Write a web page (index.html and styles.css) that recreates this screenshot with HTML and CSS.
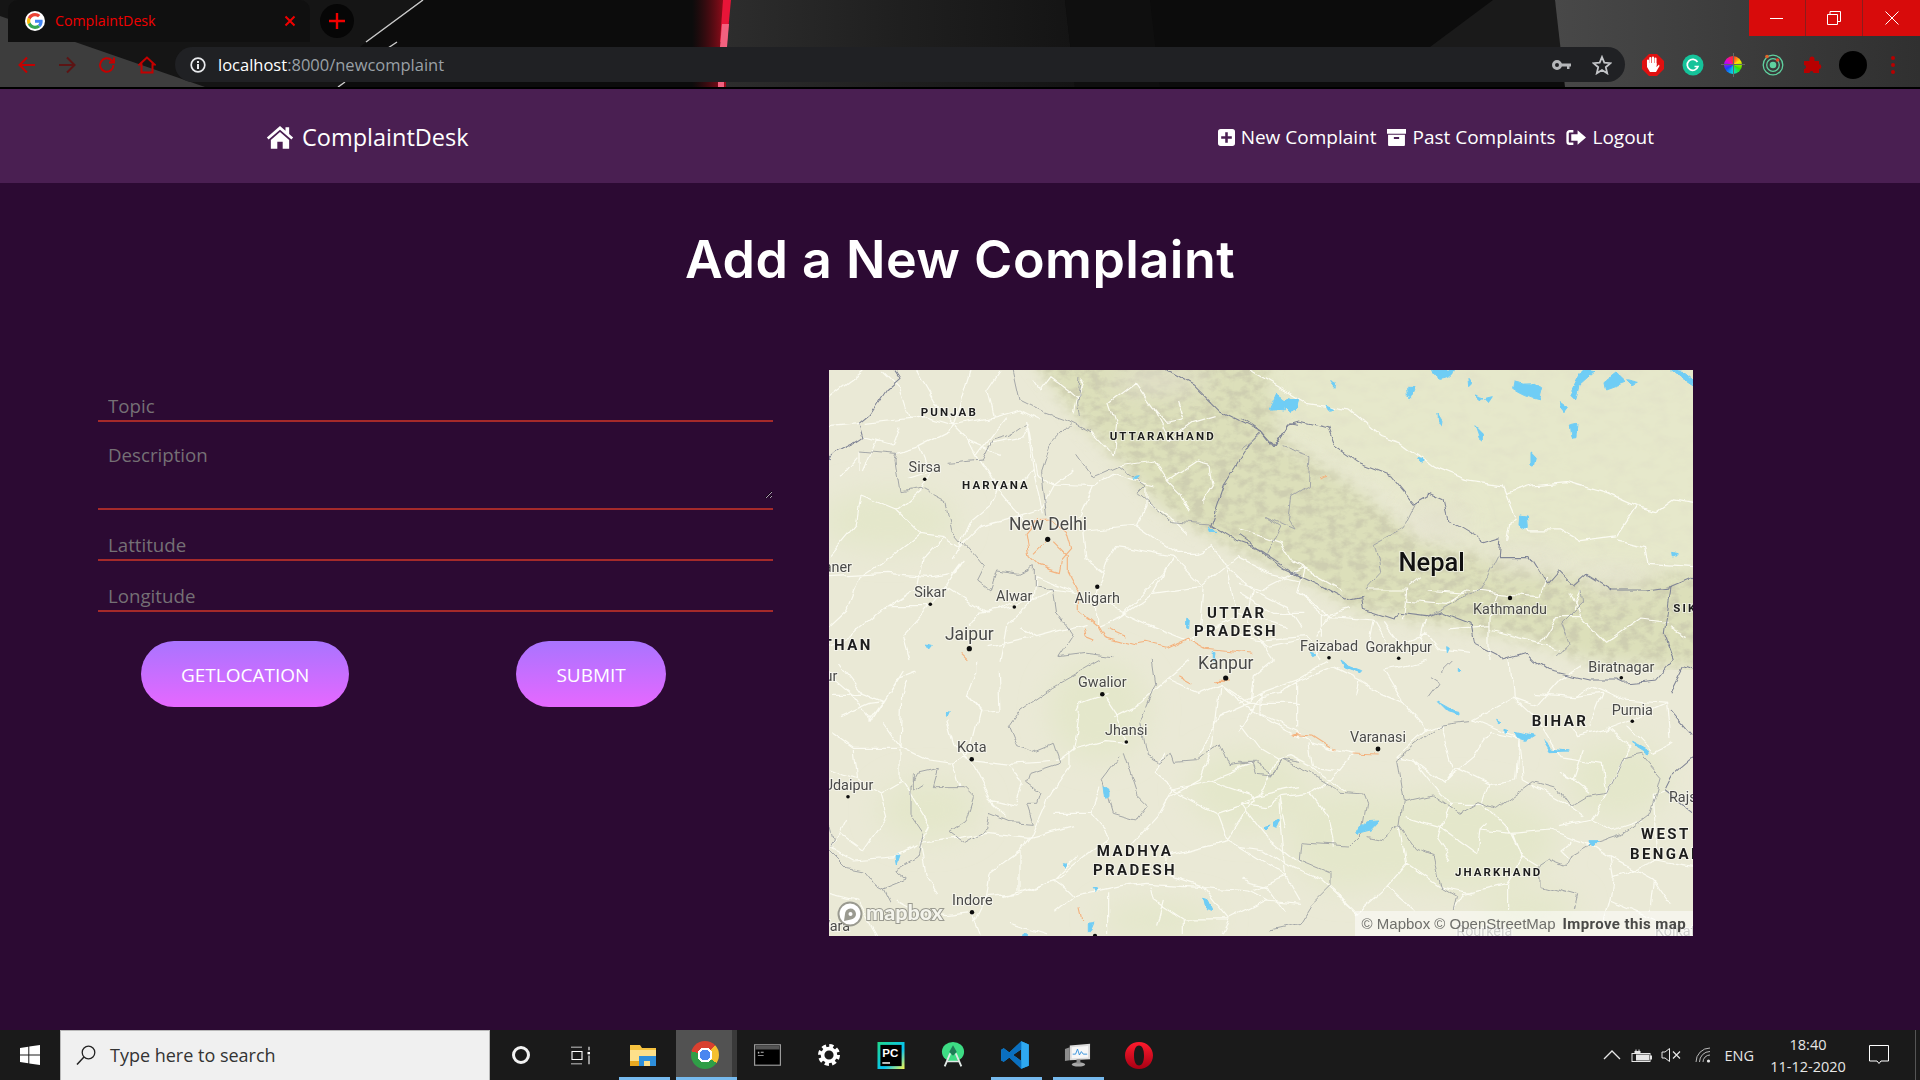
FILE: index.html
```html
<!DOCTYPE html>
<html lang="en">
<head>
    <meta charset="UTF-8">
    <meta name="viewport" content="width=device-width, initial-scale=1.0">
    <title>ComplaintDesk</title>
    <link rel="stylesheet" href="styles.css">
</head>
<body>
    <!-- browser frame -->
    <div class="browser">
        <svg class="wallpaper" viewBox="0 0 1920 87" preserveAspectRatio="none">
            <defs>
                <linearGradient id="wallMid" x1="0" x2="1" y1="0" y2="0">
                    <stop offset="0" stop-color="#2d2d2d"/>
                    <stop offset=".5" stop-color="#1f1f1f"/>
                    <stop offset="1" stop-color="#141414"/>
                </linearGradient>
                <linearGradient id="glow" x1="0" x2="1" y1="0" y2="0">
                    <stop offset="0" stop-color="#5a0810" stop-opacity="0"/>
                    <stop offset="1" stop-color="#a00c1c"/>
                </linearGradient>
                <linearGradient id="wallRight" x1="0" x2="1" y1="0" y2="0">
                    <stop offset="0" stop-color="#484848"/>
                    <stop offset="1" stop-color="#303030"/>
                </linearGradient>
            </defs>
            <rect width="1920" height="87" fill="#0c0c0c"/>
            <polygon points="0,0 420,0 360,47 340,87 0,87" fill="#151515"/>
            <polygon points="0,16 205,87 0,87" fill="#3d3d3d"/>
            <polygon points="728,0 1065,0 1075,87 724,87" fill="url(#wallMid)"/>
            <polygon points="1065,0 1150,0 1160,87 1075,87" fill="#0f0f0f"/>
            <rect x="692" width="34" height="87" fill="url(#glow)"/>
            <polygon points="723,0 731,0 727,42 720,42" fill="#e81538"/>
            <polygon points="722,24 729,24 727,47 720,47" fill="#f2617f"/>
            <rect x="718" y="82" width="6" height="5" fill="#f2617f"/>
            <polygon points="1493,0 1555,0 1563,47 1430,47" fill="#1a1a1a"/>
            <polygon points="1555,0 1920,0 1920,87 1565,87" fill="url(#wallRight)"/>
            <path d="M423 0 366 42M397 42 385 50M345 82 338 87" stroke="#c9c9c9" stroke-width="1.5" fill="none"/>
        </svg>

        <div class="tabstrip">
            <div class="tab">
                <span class="favicon">
                    <svg viewBox="0 0 48 48" width="16" height="16">
                        <path fill="#EA4335" d="M24 9.5c3.54 0 6.71 1.22 9.21 3.6l6.85-6.85C35.9 2.38 30.47 0 24 0 14.62 0 6.51 5.38 2.56 13.22l7.98 6.19C12.43 13.72 17.74 9.5 24 9.5z"/>
                        <path fill="#4285F4" d="M46.98 24.55c0-1.57-.15-3.09-.38-4.55H24v9.02h12.94c-.58 2.96-2.26 5.48-4.78 7.18l7.73 6c4.51-4.18 7.09-10.36 7.09-17.65z"/>
                        <path fill="#FBBC05" d="M10.53 28.59c-.48-1.45-.76-2.99-.76-4.59s.27-3.14.76-4.59l-7.98-6.19C.92 16.46 0 20.12 0 24c0 3.88.92 7.54 2.56 10.78l7.97-6.19z"/>
                        <path fill="#34A853" d="M24 48c6.48 0 11.93-2.13 15.89-5.81l-7.73-6c-2.15 1.45-4.92 2.3-8.16 2.3-6.26 0-11.57-4.22-13.47-9.91l-7.98 6.19C6.51 42.62 14.62 48 24 48z"/>
                    </svg>
                </span>
                <span class="tab-title">ComplaintDesk</span>
                <svg class="tab-close" viewBox="0 0 12 12" width="12" height="12"><path d="M1.5 1.5 10.500 10.500M10.500 1.500 1.500 10.500" stroke="#f00000" stroke-width="2"/></svg>
            </div>
            <div class="new-tab">
                <svg viewBox="0 0 16 16" width="16" height="16"><path d="M8 0V16M0 8H16" stroke="#f00000" stroke-width="2.400"/></svg>
            </div>
            <div class="win-buttons">
                <div class="win-btn"><svg viewBox="0 0 14 14" width="14" height="14"><path d="M0 7.500H13" stroke="#fff"/></svg></div>
                <div class="win-btn win-btn-mid"><svg viewBox="0 0 14 14" width="14" height="14"><path d="M.5 3.500H10.500V13.500H.5ZM3 3V.5H13.500V10.500H11" stroke="#fff" fill="none"/></svg></div>
                <div class="win-btn win-btn-last"><svg viewBox="0 0 14 14" width="14" height="14"><path d="M.5.5 13.500 13.500M13.500.5.5 13.500" stroke="#fff"/></svg></div>
            </div>
        </div>

        <div class="toolbar">
            <span class="tool"><svg viewBox="0 0 18 18" width="18" height="18"><path d="M17 9H2M9 1.500 1.500 9 9 16.500" class="tool-line"/></svg></span>
            <span class="tool tool-dim"><svg viewBox="0 0 18 18" width="18" height="18"><path d="M1 9H16M9 1.500 16.500 9 9 16.500" class="tool-line"/></svg></span>
            <span class="tool"><svg viewBox="0 0 18 18" width="18" height="18"><path d="M15.500 9A6.700 6.700 0 1 1 13.500 4.200L15.800 6.300M16 1.500V6.500H11" class="tool-line"/></svg></span>
            <span class="tool"><svg viewBox="0 0 18 18" width="18" height="18"><path d="M9 1.500 1.500 8.500H3.500V16.500H14.500V8.500H16.500Z" class="tool-line"/></svg></span>
            <div class="omnibox">
                <svg class="omni-info" viewBox="0 0 16 16" width="16" height="16"><circle cx="8" cy="8" r="6.800" fill="none" stroke="#e8eaed" stroke-width="1.700"/><path d="M7 7h2v5H7zM7 4h2v2H7z" fill="#e8eaed"/></svg>
                <span class="url"><span class="url-host">localhost</span>:8000/newcomplaint</span>
                <svg class="omni-key" viewBox="0 0 20 12" width="20" height="12"><circle cx="5" cy="6" r="3.500" fill="none" stroke="#b5b7ba" stroke-width="3"/><path d="M9 4.500H19V7.500H17.500V10H15V7.500H9Z" fill="#b5b7ba"/></svg>
                <svg class="omni-star" viewBox="0 0 20 20" width="20" height="20"><path d="M10 2 12.300 7.700 18.500 8.200 13.800 12.200 15.200 18.300 10 15 4.800 18.300 6.200 12.200 1.500 8.200 7.700 7.700Z" fill="none" stroke="#c4c6c9" stroke-width="1.800"/></svg>
            </div>
            <div class="extensions">
                <span class="ext"><svg viewBox="0 0 22 22" width="22" height="22"><path d="M7 0H15L22 7V15L15 22H7L0 15V7Z" fill="#e01010"/><path d="M6 11V6.500M8.300 11V4M11 11V3.500M13.500 11V4.500" stroke="#fff" stroke-width="2.100" stroke-linecap="round"/><path d="M5 9H14.500V13L17 10.500 17.500 12 14 18H8L5 13Z" fill="#fff"/></svg></span>
                <span class="ext"><svg viewBox="0 0 22 22" width="22" height="22"><circle cx="11" cy="11" r="10.500" fill="#15c39a"/><path d="M15.500 8A5.500 5.500 0 1 0 16 12.500H12.500" fill="none" stroke="#fff" stroke-width="1.700"/></svg></span>
                <span class="ext"><span class="wheel"></span></span>
                <span class="ext"><svg viewBox="0 0 22 22" width="22" height="22"><circle cx="11" cy="11" r="9.800" fill="none" stroke="#5fd09f" stroke-width="1.300"/><circle cx="11" cy="11" r="6.300" fill="none" stroke="#5fd09f" stroke-width="1.300"/><circle cx="11" cy="11" r="3.300" fill="#5fd09f"/><circle cx="5" cy="2.500" r="1.800" fill="#e2662a"/><circle cx="15.500" cy="6" r="1.800" fill="#e2462a"/></svg></span>
                <span class="ext"><svg viewBox="0 0 20 20" width="20" height="20"><path d="M1 6H6.500V4A2.500 2.500 0 1 1 11.500 4V6H16V9.300A2.300 2.300 0 1 1 16 14V18H10.500A2 2 0 1 0 6.500 18H1V14A2 2 0 1 0 1 10Z" fill="#b80000"/></svg></span>
                <span class="ext"><span class="avatar"></span></span>
                <span class="ext"><span class="menu-dots"></span></span>
            </div>
        </div>
    </div>

    <!-- page -->
    <nav class="navbar">
        <a class="brand" href="#">
            <svg viewBox="0 0 26 22" width="28" height="24"><path d="M13 .8 .8 11.500l1.600 1.900L13 4.200l10.600 9.200 1.600-1.900L21.500 8.300V2h-3.400v3.300Z" fill="#fff"/><path d="M13 6.300 4.500 13.700V22h6v-6.500h5V22h6V13.700Z" fill="#fff"/></svg>
            ComplaintDesk
        </a>
        <div class="nav-links">
            <a class="nav-link" href="#">
                <svg viewBox="0 0 16 16" width="17" height="17"><path fill-rule="evenodd" d="M2.500 0h11A2.500 2.500 0 0 1 16 2.500v11a2.500 2.500 0 0 1-2.500 2.500h-11A2.500 2.500 0 0 1 0 13.500v-11A2.500 2.500 0 0 1 2.500 0ZM6.800 3v3.800H3v2.400h3.800V13h2.400V9.200H13V6.800H9.200V3Z" fill="#fff"/></svg>
                New Complaint
            </a>
            <a class="nav-link" href="#">
                <svg viewBox="0 0 18 16" width="19" height="17"><path fill-rule="evenodd" d="M0 0h18v4.500H0ZM1 5.500h16V15a1 1 0 0 1-1 1H2a1 1 0 0 1-1-1ZM6.500 7.500v2h5v-2Z" fill="#fff"/></svg>
                Past Complaints
            </a>
            <a class="nav-link" href="#">
                <svg viewBox="0 0 19 16" width="20" height="17"><path d="M7 2H3.500A2 2 0 0 0 1.500 4v8a2 2 0 0 0 2 2H7" fill="none" stroke="#fff" stroke-width="2.300"/><path d="M11 1 19 8l-8 7v-4H5V5h6Z" fill="#fff"/></svg>
                Logout
            </a>
        </div>
    </nav>

    <main class="content">
        <h1 class="title">Add a New Complaint</h1>
        <section class="columns">
            <form class="complaint-form">
                <input class="field" type="text" placeholder="Topic">
                <div class="area-wrap">
                    <textarea class="field field-area" placeholder="Description"></textarea>
                </div>
                <input class="field" type="text" placeholder="Lattitude">
                <input class="field" type="text" placeholder="Longitude">
                <div class="form-buttons">
                    <button class="btn" type="button">GETLOCATION</button>
                    <button class="btn" type="button">SUBMIT</button>
                </div>
            </form>

            <div class="map">
                <svg class="map-canvas" viewBox="0 0 864 566" width="864" height="566">
                    <defs>
                        <filter id="soft" x="-20%" y="-20%" width="140%" height="140%"><feGaussianBlur stdDeviation="14"/></filter>
                        <filter id="relief" x="0" y="0" width="100%" height="100%">
                            <feGaussianBlur in="SourceGraphic" stdDeviation="8" result="shape"/>
                            <feTurbulence type="fractalNoise" baseFrequency=".08 .11" numOctaves="4" seed="11" result="noise"/>
                            <feColorMatrix in="noise" type="matrix" values="0 0 0 0 .62  0 0 0 0 .62  0 0 0 0 .44  3.400 0 0 0 -1.400" result="shade"/>
                            <feComposite in="shade" in2="shape" operator="in" result="clipped"/>
                            <feMerge><feMergeNode in="shape"/><feMergeNode in="clipped"/></feMerge>
                        </filter>
                        <filter id="crumple" x="0" y="0" width="100%" height="100%">
                            <feGaussianBlur in="SourceGraphic" stdDeviation="14" result="shape"/>
                            <feTurbulence type="fractalNoise" baseFrequency=".05 .09" numOctaves="4" seed="4" result="noise"/>
                            <feColorMatrix in="noise" type="matrix" values="0 0 0 0 .76  0 0 0 0 .76  0 0 0 0 .58  2 0 0 0 -.85" result="shade"/>
                            <feComposite in="shade" in2="shape" operator="in" result="clipped"/>
                            <feMerge><feMergeNode in="shape"/><feMergeNode in="clipped"/></feMerge>
                        </filter>
                        <!-- bends the straight polylines so they read as roads and rivers -->
                        <filter id="wobble" filterUnits="userSpaceOnUse" x="0" y="0" width="864" height="566" color-interpolation-filters="sRGB">
                            <feTurbulence type="fractalNoise" baseFrequency=".045" numOctaves="3" seed="3" result="warp"/>
                            <feDisplacementMap in="SourceGraphic" in2="warp" scale="9" xChannelSelector="R" yChannelSelector="G"/>
                            <feGaussianBlur stdDeviation=".35"/>
                        </filter>
                    </defs>

                    <rect width="864" height="566" fill="#eae9d6"/>

                    <!-- terrain -->
                    <g filter="url(#soft)" fill="#e4e7cb">
                        <ellipse cx="60" cy="150" rx="70" ry="30"/>
                        <ellipse cx="270" cy="340" rx="50" ry="50"/>
                        <ellipse cx="100" cy="440" rx="50" ry="30"/>
                        <ellipse cx="420" cy="420" rx="60" ry="40"/>
                        <ellipse cx="620" cy="470" rx="110" ry="50"/>
                        <ellipse cx="520" cy="470" rx="60" ry="50"/>
                        <ellipse cx="790" cy="410" rx="50" ry="40"/>
                        <ellipse cx="700" cy="540" rx="50" ry="20"/>
                        <ellipse cx="330" cy="550" rx="60" ry="18"/>
                    </g>
                    <polygon filter="url(#crumple)" fill="#e6e8cb" points="330,-30 900,-30 900,230 640,175 540,110 440,60"/>
                    <polygon filter="url(#relief)" fill="#dcdfba" points="190,-30 430,-30 450,70 530,120 590,170 700,200 780,215 900,200 900,300 760,290 700,270 620,255 530,240 470,205 400,175 335,140 300,100 250,50"/>
                    <g filter="url(#soft)" fill="#e2dfcd" opacity=".8">
                        <ellipse cx="330" cy="10" rx="50" ry="14"/>
                        <ellipse cx="610" cy="150" rx="30" ry="14"/>
                        <ellipse cx="700" cy="190" rx="45" ry="9"/>
                        <ellipse cx="790" cy="210" rx="35" ry="10"/>
                    </g>

                    <g filter="url(#wobble)">
                    <!-- north west tile -->
                    <g transform="translate(-9 -10) scale(.3333)">
                        <path class="road" d="M290,30 L345,125 L400,195 L445,240 L470,290 L530,385 L575,440 L620,490M240,80 L270,175 L315,170 L400,195 L530,170 L600,150 L660,180M140,190 L230,180 L270,175M130,230 L220,255 L240,200M170,240 L130,330M400,195 L390,215 L300,260 L230,280M510,250 L610,230 L625,190M620,180 L640,330 L670,460M625,200 L650,340 L700,375 L760,330M700,375 L660,450 L600,470M700,375 L820,380 L880,340 L1000,375M820,380 L780,470 L700,510M530,385 L510,440 L450,490 L400,600M600,470 L480,500 L420,560 L375,530 L310,600 L295,680M430,600 L400,640 L340,650 L200,640 L30,650M120,405 L105,500 L30,590M800,510 L950,495 L1070,580 L1130,580 L1180,560M950,495 L975,440 L975,380M785,510 L795,600 L850,640 L830,680 L830,800M850,640 L860,610 L890,560 L930,565 L1060,590 L1030,640 L900,770M1060,590 L1150,680 L1140,790 L1120,840M1140,680 L1250,590 L1350,640 L1440,660M1220,620 L1300,690 L1400,740 L1440,800M830,720 L1000,800 L1100,840M770,700 L645,650 L640,720 L560,800 L540,900M295,680 L200,740 L90,830 L27,850M330,740 L250,830 L270,900M450,800 L480,760 L580,740 L640,720M600,800 L650,830 L800,790M500,860 L640,830M27,110 L130,30M120,270 L120,330M115,290 L60,355M640,60 L660,90 L690,50 L770,110 L790,60M770,110 L760,160M810,215 L880,290 L890,190 L870,130 L950,70 L1000,140 L1040,190 L1090,180 L1070,120M1000,140 L1050,240 L1120,190 L1190,170M900,315 L1000,300 L1040,360 L1070,340 L1130,300 L1170,310 L1180,380 L1150,430M1040,360 L1080,400 L1110,460M30,200 L120,190M240,80 L190,30M450,30 L400,195M470,290 L560,170M520,170 L500,90 L540,30M300,260 L330,330 L265,350M530,385 L620,360 L640,330M445,240 L540,280M120,405 L230,450 L300,390 L330,330M230,450 L300,520 L375,530M300,520 L210,590 L120,650M120,650 L80,750 L27,800M200,740 L330,740 L380,680 L430,600M380,680 L500,760M500,760 L600,720M900,770 L1000,700 L1140,680M830,800 L900,770M640,720 L700,690 L770,700M1180,560 L1220,620M1100,840 L1250,760 L1400,800M1250,760 L1220,620M1000,700 L1060,590M1300,690 L1280,790 L1340,860M1340,860 L1440,840M980,430 L1060,480 L1100,520"/>
                        <path class="border" d="M225,300 L230,280 L120,270M225,300 L240,395 L300,385 L375,425 L395,510 L490,620 L470,660 L510,690 L530,630 L600,640 L640,620 L640,680 L700,690 L710,760 L760,830 L720,890M750,190 L690,255 L665,330 L680,470M770,280 L820,350 L900,315 L975,375 L950,400 L1050,485 L1170,495M580,30 L600,120 L680,160 L750,185 L810,215M380,310 L490,300 L520,240 L555,230 L585,215 L620,190M780,60 L770,130 L775,170M880,890 L800,880 L720,890"/>
                        <path class="border-dark" d="M27,300 C40,270 110,255 132,232 L120,190 L150,165 L200,90 L240,55 L225,32M1040,30 L1120,75 L1200,155 L1320,215 L1360,260 L1410,185 L1440,190M1170,495 L1210,375 L1290,250 L1320,220M1170,495 L1250,545 L1320,570 L1440,650"/>
                        <path class="motorway" d="M645,580 L680,545M740,515 L755,565 L725,600 L718,638 L660,620 L630,590 L618,520 L650,482 L700,480 L740,515M700,545 L745,590 L745,640 L775,695 L775,750 L830,795 L850,830 L940,855 L975,850 L1040,865 L1105,835 L1160,865 L1300,880M790,800 L795,830 L820,840M425,880 L445,900M860,805 L915,828"/>
                        <path class="lake" d="M1352,140 L1370,100 L1385,120 L1400,112 L1435,120 L1425,150 L1405,157 L1390,140 L1355,148ZM945,352 L958,350 L948,360ZM1168,500 L1188,518 L1175,517ZM310,855 L328,860 L320,870ZM1100,775 L1108,778 L1106,800 L1100,798ZM1180,875 L1188,875 L1186,900 L1180,900Z"/>
                    </g>

                    <!-- north east tile -->
                    <g transform="translate(411 -10) scale(.3333)">
                        <path class="road road-strong" d="M30,30 L200,130 L330,150 L420,225 L480,245 L580,320 L680,360 L790,375 L800,400 L880,375 L980,365 L1100,400 L1190,440 L1250,455 L1300,420 L1360,430M800,400 L830,470 L810,490 L800,540M1190,440 L1130,530 L1020,545 L960,510 L870,510 L850,500M1130,540 L1220,560 L1230,610 L1360,620"/>
                        <path class="road" d="M0,510 L120,550 L150,600 L240,650 L310,690M0,670 L60,690 L130,655 L190,620 L170,700 L250,770 L330,745M380,690 L500,690 L490,780M500,680 L540,650M560,690 L680,700M490,720 L620,730 L680,690 L770,700 L900,710 L920,650M770,700 L750,770 L750,900M750,810 L900,850 L960,870M170,700 L270,770 L230,830M270,770 L400,780 L440,850M430,790 L480,860 L560,820 L600,870M0,830 L60,840 L200,830 L240,900M1020,690 L1000,750M1290,800 L1340,830M0,700 L100,760 L190,760M250,770 L250,830M560,780 L540,850M620,810 L750,800M900,850 L950,770 L1020,770 L1100,850M1100,850 L1200,780 L1280,790M60,840 L100,900M400,780 L380,880M600,870 L690,880M1020,770 L990,700"/>
                        <path class="border" d="M525,430 L490,500 L400,550 L420,640 L375,690M770,590 L720,690 L650,720 L560,770M210,290 L205,380 L155,410 L145,480 L165,510 L75,470 L120,500 L80,580M0,270 L60,225M1020,690 L1025,730 L965,790 L990,850 L950,890M125,260 L210,290"/>
                        <path class="border-dark" d="M0,175 L60,215 L100,265 L145,190 L180,180 L260,200 L280,255 L360,310 L450,345 L520,430 L570,400 L615,420 L630,485 L730,545 L780,530 L775,590 L870,590 L920,670 L955,630 L1000,675 L1040,640 L1120,690 L1220,690 L1290,680 L1360,650M0,530 L130,625 L240,675 L320,720 L365,710 L370,750 L460,780 L480,760 L560,770 L600,755 L690,790 L700,845 L770,880 L790,900M1290,680 L1270,820 L1300,900M790,900 L860,880 L880,900"/>
                        <path class="motorway" d="M245,360 L270,352"/>
                        <path class="lake" d="M575,30 L640,30 Q635,55 600,58 Q580,50 575,30ZM820,60 Q850,70 880,65 L905,80 L895,120 Q850,110 815,85ZM1030,30 L1065,35 L1020,75 L1010,115 L995,100ZM1125,42 L1155,70 L1100,90 L1095,65ZM1295,30 L1330,35 L1360,60 V78 Q1330,60 1295,30ZM92,140 Q110,125 110,100 L125,110 L130,150 L95,145ZM135,115 L175,118 L170,145 L145,155 L133,145ZM500,85 L525,85 L515,110 L502,105ZM275,68 L290,75 L288,85ZM678,55 L690,70 L680,80ZM708,102 L735,110 L725,117ZM740,115 L760,110 L750,125ZM958,125 L985,145 L975,158 L960,140ZM985,195 L1008,190 L1005,230 L990,232ZM588,165 L600,185 L598,197 L590,190ZM705,200 L730,225 L730,247 L718,238ZM870,278 L886,295 L880,318 L870,312ZM842,462 L865,465 L868,500 L850,508 L840,495ZM255,135 L278,145 L262,148ZM530,295 L550,300 L540,306ZM1298,574 L1315,578 L1300,585ZM1160,65 L1195,73 L1175,80ZM208,880 L225,885 L215,890ZM620,860 L628,865 L622,878Z"/>
                    </g>

                    <!-- south west tile -->
                    <g transform="translate(-9 290) scale(.3333)">
                        <path class="road" d="M30,100 L130,100 L190,125 L240,50 L290,30M60,170 L150,130 L190,125 L150,180 L150,190 L250,30M190,190 L240,260 L320,300 L400,310 L450,270 L480,150 L445,110 L470,40 L470,0M30,215 L100,265 L240,265 L245,110 L260,60M130,100 L60,10M445,110 L480,155 L540,150 L535,30M380,180 L400,250 L450,300 L510,420 L590,440M450,295 L570,310 L610,380 L590,430M570,310 L720,300 L760,270 L860,245 L920,250M750,280 L750,320 L680,420 L630,535 L500,520 L300,550M630,535 L760,500M630,535 L600,575 L510,640 L500,710 L600,700 L720,650M600,575 L600,690M720,650 L780,600 L870,530 L810,460 L840,380M770,150 L780,130 L860,100M780,130 L770,220 L760,270M850,110 L890,170 L920,245M240,270 L240,360 L250,370M30,560 L100,600 L230,590 L290,560M60,520 L30,560M80,480 L60,520 L130,570M300,550 L320,650 L350,700M550,710 L700,660 L730,680 L760,710 L700,760M760,710 L900,680 L980,670 L1150,680 L1290,690 L1345,720M1150,680 L1030,640 L1040,590 L1220,545 L1300,420 L1290,400 L1170,360 L1060,390 L1020,460 L930,560M1020,460 L1050,410 L1140,360 L1180,250 L1200,70M1220,540 L1190,460 L1060,390M1220,540 L1270,570 L1400,650 L1440,720M1300,410 L1440,380M1290,130 L1440,130M1210,80 L1300,150 L1380,200 L1440,230M1380,100 L1320,110 L1290,160 L1260,210M990,680 L1000,720 L1090,780M1030,720 L1010,800M1150,680 L1230,780 L1210,820M1230,775 L1340,720 L1440,730M1380,420 L1385,510 L1400,650M1090,780 L1090,825M860,700 L860,825M455,760 L380,770M455,760 L480,825M30,40 L100,100 L150,180M30,330 L110,360 L180,400 L240,365M110,360 L100,270M180,400 L200,470 L130,570M250,370 L330,500 L300,550M400,310 L420,380M510,420 L560,470M880,170 L960,130 L1040,60 L1130,100 L1200,70M1040,60 L1110,0M1200,70 L1290,130 L1300,50 L1360,0M1290,130 L1200,170 L1130,290M1060,390 L1000,340 L1040,280M1170,360 L1300,310M810,460 L700,460M1190,460 L1250,440 L1300,420M1400,650 L1300,690M1090,780 L1230,780M700,660 L770,590M570,790 L680,825M30,700 L110,720 L170,825M230,720 L300,760 L380,770M500,710 L460,790"/>
                        <path class="border" d="M1000,0 L1010,70 L960,190 L980,290 L1020,310 L1060,280 L1070,310 L1130,305 L1200,250 L1230,320 L1300,310 L1310,340 L1360,345 L1380,300 L1440,310M840,0 L700,80 L600,150 L565,200 L590,260 L640,275 L700,250 L720,310 L630,340 L620,370 L660,400 L650,430 L620,430 L640,490 L570,485 L510,460 L500,510 L430,550 L390,520 L435,490 L460,410 L430,380 L340,380 L355,325 L290,340 L270,380 L270,460 L310,520 L295,590 L230,630 L265,660 L190,690 L210,730M30,570 L80,620 L130,630 L170,680 L190,690M900,290 L850,355 L880,460 L950,480 L985,435 L950,400 L910,280M280,340 L280,390 L310,370M30,500 L40,540 L30,560"/>
                        <path class="motorway" d="M1075,50 L1120,75M1180,62 L1230,60M1415,220 L1440,215M780,745 L788,780"/>
                        <path class="lake" d="M372,158 L385,155 L378,170ZM855,375 L870,385 L870,410 L860,415ZM228,590 L240,588 L232,612ZM730,608 L742,610 L735,622ZM820,686 L832,688 L825,698ZM1148,715 L1165,720 L1180,752 L1155,745ZM1360,490 L1382,480 L1372,505 L1358,500ZM1328,503 L1345,498 L1335,510ZM805,790 L822,788 L812,812 L805,812ZM607,820 L622,822 V828 H605Z"/>
                    </g>

                    <!-- south east tile -->
                    <g transform="translate(411 290) scale(.3333)">
                        <path class="road" d="M0,130 L60,100 L170,60 L270,0M115,100 L180,60 L280,20 L360,60 L420,100 L490,130 L430,30M60,100 L60,160 L170,210 L220,250 L270,265 L340,280M170,60 L170,200M350,100 L360,60M0,190 L60,270 L110,300 L150,290 L210,320 L320,395M210,250 L220,320M340,280 L300,330 L210,400 L120,410 L80,440 L0,430M120,410 L130,460 L140,510M470,290 L520,300 L610,370 L650,320 L750,370 L830,360 L840,240M750,370 L730,430 L810,510 L850,590 L800,670 L670,700M610,370 L640,340 L700,290 L750,220 L845,240 L700,180M600,195 L640,320M700,180 L820,115 L810,0M820,115 L900,190 L960,290 L1090,310 L1100,400M1030,270 L1000,360 L970,340M840,240 L850,360M960,340 L1000,360 L1050,400M500,470 L600,500 L710,580 L720,510 L740,490M600,500 L590,540 L630,600M720,510 L820,520 L850,600M820,520 L930,510 L1050,550 L1110,590 L1240,660 L1290,730M1240,660 L1230,750M1110,590 L1120,650 L1110,720 L1090,800M990,600 L960,570 L1000,540M850,590 L900,620M0,560 L70,570 L130,610 L240,660 L350,760M0,430 L70,520 L180,610M270,680 L340,750M800,670 L800,750M670,700 L640,750M1000,110 L1090,100 L1050,200M1100,200 L1170,260 L1130,330 L1100,400M820,115 L890,140 L960,60 L1020,20M880,100 L1000,110 L1060,80 L1150,120 L1280,130 L1290,240M1110,720 L1250,780M430,30 L490,20 L560,0M490,130 L560,210 L470,290M560,210 L600,195M220,320 L300,330M110,300 L60,400 L0,430M210,400 L260,470 L280,560M350,760 L440,680 L500,610 L480,500M500,610 L600,680 L700,700M440,680 L520,750M0,660 L80,680 L130,750M1120,650 L1250,600 L1360,620M1250,600 L1240,400 L1270,390M1160,200 L1240,280 L1300,250M1100,400 L1050,480 L1120,510 L1210,480M1050,480 L960,500M850,360 L960,420 L1030,470M640,430 L600,500M730,430 L640,430 L600,400 L520,300M980,180 L1010,230 L1090,210 L1170,180 L1280,130"/>
                        <path class="border" d="M0,310 L50,310 L100,345 L120,300 L230,350 L280,380 L300,400 L370,405 L380,430 L365,520 L330,555 L180,545 L175,600 L270,640 L270,680 L210,740 L180,790 L90,810M380,530 L430,540 L480,500 L490,425 L470,300 L600,195 L690,185M490,425 L580,405 L660,460 L720,425 L770,445 L880,365 L950,385 L990,440 L1040,410 L1100,400 L1150,290 L1200,280 L1260,350 L1230,460 L1150,520 L1060,550 L990,590 L980,620 L930,600 L900,620 L900,680 L1010,710 L1000,750M480,500 L530,570 L580,590 L600,680 L650,710 L640,750M570,50 L600,70 L570,110M640,0 L600,40"/>
                        <path class="border-dark" d="M880,0 L920,30 L1050,60 L1130,60 L1150,70 L1250,60 L1300,0M1290,100 L1330,20 L1360,30M1290,150 L1360,230M1270,390 L1290,350 L1360,290M1270,390 L1360,460"/>
                        <path class="motorway" d="M160,220 L215,225 L270,260M280,265 L290,268M335,282 L410,285"/>
                        <path class="lake" d="M300,0 L320,15 L365,32 L360,38 L310,20ZM595,125 L640,150 L660,155 L660,165 L625,155ZM770,178 L783,186 L775,188ZM795,208 L808,212 L795,220ZM828,220 L880,232 L860,244 L835,235ZM910,240 L935,265 L982,270 L930,272ZM1178,250 L1225,275 L1222,285 L1185,262ZM350,515 L385,485 L420,483 L395,510 L355,520ZM70,505 L85,500 L75,510ZM100,490 L122,480 L112,503 L98,500ZM1050,545 L1072,545 L1060,558ZM655,25 L665,35 L655,34Z"/>
                    </g>
                    </g>

                    <!-- towns -->
                    <g class="dots">
                        <circle cx="95.700" cy="109.300" r="1.800"/><circle cx="218.700" cy="169.300" r="2.600"/><circle cx="101.300" cy="234.300" r="1.800"/>
                        <circle cx="185.300" cy="237" r="1.800"/><circle cx="268.300" cy="216.700" r="2.200"/><circle cx="140.300" cy="278.700" r="2.600"/>
                        <circle cx="681" cy="228" r="2.200"/><circle cx="500" cy="287.700" r="1.800"/><circle cx="569.700" cy="288.300" r="1.800"/>
                        <circle cx="273.300" cy="324.300" r="2.300"/><circle cx="396.700" cy="308" r="2.600"/><circle cx="297.300" cy="372" r="1.800"/>
                        <circle cx="142.700" cy="389.300" r="2.300"/><circle cx="19" cy="426.700" r="1.800"/><circle cx="143" cy="542.300" r="2.200"/>
                        <circle cx="792.300" cy="307.700" r="1.800"/><circle cx="803.300" cy="351.300" r="1.800"/><circle cx="549" cy="379" r="2.400"/>
                        <circle cx="266" cy="566" r="2.200"/>
                    </g>

                    <!-- labels -->
                    <g class="labels">
                        <text class="state state-sm" x="120.300" y="45.500">PUNJAB</text>
                        <text class="state state-sm" x="333.700" y="70">UTTARAKHAND</text>
                        <text class="state state-sm" x="167" y="119">HARYANA</text>
                        <text class="state state-sm" x="669.700" y="506">JHARKHAND</text>
                        <text class="state" x="407.700" y="247.500">UTTAR</text>
                        <text class="state" x="407" y="266">PRADESH</text>
                        <text class="state" x="306" y="485.500">MADHYA</text>
                        <text class="state" x="306" y="504.500">PRADESH</text>
                        <text class="state" x="731" y="356">BIHAR</text>
                        <text class="state state-end" x="43.700" y="280">THAN</text>
                        <text class="state state-start" x="812" y="469">WEST</text>
                        <text class="state state-start" x="801" y="488.500">BENGAL</text>
                        <text class="state state-sm state-start" x="844.300" y="241.500">SIK</text>

                        <text class="city" x="95.700" y="102">Sirsa</text>
                        <text class="city city-lg" x="219" y="160">New Delhi</text>
                        <text class="city city-end" x="23" y="201.500">Bikaner</text>
                        <text class="city" x="101.300" y="227">Sikar</text>
                        <text class="city" x="185.300" y="230.500">Alwar</text>
                        <text class="city" x="268.300" y="232.500">Aligarh</text>
                        <text class="city city-lg" x="140.300" y="269.500">Jaipur</text>
                        <text class="city" x="500" y="280.500">Faizabad</text>
                        <text class="city" x="569.700" y="282">Gorakhpur</text>
                        <text class="city" x="681" y="243.500">Kathmandu</text>
                        <text class="city city-end" x="8.300" y="310.500">ur</text>
                        <text class="city" x="273.300" y="316.500">Gwalior</text>
                        <text class="city city-lg" x="396.700" y="298.500">Kanpur</text>
                        <text class="city" x="297.300" y="365">Jhansi</text>
                        <text class="city" x="142.700" y="382">Kota</text>
                        <text class="city city-end" x="44.300" y="420">Udaipur</text>
                        <text class="city" x="143.300" y="534.500">Indore</text>
                        <text class="city city-end" x="21" y="561">Wara</text>
                        <text class="city" x="792.300" y="301.500">Biratnagar</text>
                        <text class="city" x="803.300" y="344.500">Purnia</text>
                        <text class="city" x="549" y="371.500">Varanasi</text>
                        <text class="city city-start" x="840" y="431.500">Rajshahi</text>
                        <text class="city city-faint" x="655.300" y="566">Rourkela</text>
                        <text class="city city-faint city-start" x="826" y="566">Kolkata</text>
                        <text class="country" x="602.700" y="201">Nepal</text>
                    </g>

                    <!-- mapbox logo -->
                    <g class="mapbox-logo">
                        <circle cx="21" cy="544" r="11.500" fill="#fff" stroke="#9a9a90" stroke-width="2"/>
                        <path d="M15 551 16 544A5.500 5.500 0 1 1 22 549.500Z" fill="#9a9a90"/>
                        <circle cx="21.500" cy="544" r="2" fill="#fff"/>
                        <text class="mapbox-word" x="37" y="550">mapbox</text>
                    </g>
                </svg>
                <div class="attribution">
                    <span>© Mapbox © OpenStreetMap</span>
                    <b>Improve this map</b>
                </div>
            </div>
        </section>
    </main>

    <!-- windows taskbar -->
    <footer class="taskbar">
        <div class="start"><svg viewBox="0 0 20 20" width="20" height="20"><path d="M0 2.900 8.300 1.700V9.500H0ZM9.300 1.600 20 0V9.500H9.300ZM0 10.500H8.300V18.300L0 17.100ZM9.300 10.500H20V20L9.300 18.400Z" fill="#fff"/></svg></div>
        <div class="search">
            <svg viewBox="0 0 20 20" width="20" height="20"><circle cx="12.500" cy="7.500" r="6.300" fill="none" stroke="#222" stroke-width="1.300"/><path d="M8 12 1 19.500" stroke="#222" stroke-width="1.500"/></svg>
            <span>Type here to search</span>
        </div>
        <div class="task"><span class="cortana"></span></div>
        <div class="task task-view"><svg viewBox="0 0 20 24" width="20" height="19" preserveAspectRatio="none"><path d="M1 1.500H12M1 22.500H12M2 7H12V17H2ZM19 1V5.500M19 12V23" stroke="#fff" fill="none" stroke-width="1.100"/><rect x="17.500" y="7.500" width="3" height="3" fill="#fff"/></svg></div>
        <div class="task task-open">
            <svg viewBox="0 0 28 28" width="28" height="28"><path d="M1 4H11L13 7H27V25H1Z" fill="#f7c33f"/><path d="M1 9H27V25H1Z" fill="#fde08a"/><path d="M10 25V15H27V25H21V20H15V25Z" fill="#2e8fdc"/><path d="M1 20H10V25H1Z" fill="#e9a820"/></svg>
        </div>
        <div class="task task-active"><span class="chrome-logo"></span></div>
        <div class="task"><svg viewBox="0 0 28 28" width="27" height="22" preserveAspectRatio="none"><rect x=".5" y="1" width="27" height="26" fill="#000" stroke="#9b9b9b" stroke-width="1.500"/><rect x="1.500" y="2" width="25" height="5" fill="#555"/><path d="M4 10h1.500v2H4zM7 10h3v1H7zM4 14h6v1H4z" fill="#bbb"/></svg></div>
        <div class="task"><svg viewBox="0 0 24 24" width="22" height="22"><circle cx="12" cy="12" r="7" fill="none" stroke="#fff" stroke-width="4"/><circle cx="12" cy="12" r="10" fill="none" stroke="#fff" stroke-width="4" stroke-dasharray="4.500 3.350"/></svg></div>
        <div class="task">
            <svg viewBox="0 0 28 28" width="28" height="27">
                <defs><linearGradient id="pcGrad" x1="0" x2="1" y1="0" y2="1"><stop offset="0" stop-color="#21d789"/><stop offset=".6" stop-color="#07c3f2"/><stop offset="1" stop-color="#fcf84a"/></linearGradient></defs>
                <rect width="28" height="28" fill="url(#pcGrad)"/><rect x="3" y="3" width="22" height="22" fill="#000"/>
                <text class="pc-mark" x="5" y="16">PC</text><rect x="5" y="21" width="8" height="1.500" fill="#fff"/>
            </svg>
        </div>
        <div class="task"><svg viewBox="0 0 26 32" width="24" height="26" preserveAspectRatio="none"><circle cx="13" cy="12" r="12" fill="#3ddc84"/><path d="M13 4 17 12 13 17 9 12Z" fill="#1f7a56"/><path d="M10 14 4 30M16 14 22 30M6 24H20" stroke="#dfe8e4" stroke-width="2" fill="none"/></svg></div>
        <div class="task task-open"><svg viewBox="0 0 24 24" width="30" height="30"><path d="M17 1 7.500 10 3 6.600 1 7.700V16.300L3 17.400 7.500 14 17 23 23 20.500V3.500ZM17 7.300V16.700L10.500 12Z" fill="#1e9de8"/><path d="M17 1 23 3.500V20.500L17 23Z" fill="#2fa8f0"/><path d="M7.500 10 3 6.600 1 7.700V16.300L3 17.400 7.500 14 17 23V16.700L10.500 12 17 7.300V1Z" fill="#0a6fc0"/></svg></div>
        <div class="task task-open"><svg viewBox="0 0 28 28" width="27" height="24" preserveAspectRatio="none"><path d="M6 3 27 1V19L6 20Z" fill="#dcdcdc"/><path d="M8 5 25 3.500V17L8 18Z" fill="#f7f7f7"/><path d="M9 13H12L14 7 16 14 18 10 20 13H24" fill="none" stroke="#2e8fdc" stroke-width="1"/><path d="M1 7 6 5V20L1 21Z" fill="#8d8d8d"/><ellipse cx="15" cy="25" rx="7" ry="2.500" fill="#a8a8a8"/><rect x="13" y="19" width="4" height="5" fill="#8d8d8d"/></svg></div>
        <div class="task">
            <svg viewBox="0 0 28 32" width="28" height="29" preserveAspectRatio="none"><defs><linearGradient id="operaRed" x1="0" x2="0" y1="0" y2="1"><stop offset="0" stop-color="#ff1b2d"/><stop offset="1" stop-color="#a70014"/></linearGradient></defs><path fill-rule="evenodd" d="M14 1C6 1 0 7.500 0 16s6 15 14 15 14-6.500 14-15S22 1 14 1ZM14 5c3.500 0 5 5 5 11s-1.500 11-5 11-5-5-5-11S10.500 5 14 5Z" fill="url(#operaRed)"/></svg>
        </div>

        <div class="tray">
            <svg class="tray-chevron" viewBox="0 0 18 10" width="18" height="10"><path d="M1 9 9 1 17 9" fill="none" stroke="#e6e6e6" stroke-width="1.300"/></svg>
            <svg class="tray-battery" viewBox="0 0 21 14" width="21" height="14"><path d="M5 4V1.500M8 4V1.500" stroke="#e6e6e6"/><rect x="3.500" y="3" width="6" height="3" fill="#e6e6e6"/><rect x="1" y="5.500" width="18" height="8" fill="none" stroke="#e6e6e6"/><rect x="5" y="6.500" width="13" height="6" fill="#e6e6e6"/><rect x="19" y="7.500" width="2" height="4" fill="#e6e6e6"/></svg>
            <svg class="tray-sound" viewBox="0 0 20 14" width="20" height="14"><path d="M1 4H4L8.500 .5V13.500L4 10H1Z" fill="none" stroke="#e6e6e6"/><path d="M12 3.500 19 10.500M19 3.500 12 10.500" stroke="#e6e6e6" stroke-width="1.200"/></svg>
            <svg class="tray-wifi" viewBox="0 0 16 16" width="16" height="16"><path d="M1 15A14 14 0 0 1 15 1M4.500 15A10.500 10.500 0 0 1 15 4.500M8 15A7 7 0 0 1 15 8" fill="none" stroke="#b9b9b9" stroke-width="1"/><circle cx="13.500" cy="14" r="1.600" fill="#e6e6e6"/></svg>
            <span class="tray-lang">ENG</span>
            <div class="clock"><span>18:40</span><span>11-12-2020</span></div>
            <svg class="tray-notes" viewBox="0 0 20 20" width="20" height="20"><path d="M.5 .5H19.500V16H12L10 18.500 8 16H.5Z" fill="none" stroke="#fff"/></svg>
            <span class="show-desktop"></span>
        </div>
    </footer>
</body>
</html>
```

FILE: styles.css
```css
* {
    box-sizing: border-box;
}

html,
body {
    height: 100%;
}

body {
    margin: 0;
    display: flex;
    flex-direction: column;
    height: 1080px;
    overflow: hidden;
    background-color: #2c0a33;
    font-family: "Open Sans", "Noto Sans", sans-serif;
    color: #fff;
}

a {
    color: #fff;
    text-decoration: none;
}

/* browser frame */
.browser {
    position: relative;
    flex: none;
    height: 89px;
    border-bottom: 2px solid #000;
}

.wallpaper {
    position: absolute;
    top: 0;
    left: 0;
    width: 100%;
    height: 87px;
}

.tabstrip {
    position: relative;
    display: flex;
    height: 47px;
}

.tab {
    display: flex;
    align-items: center;
    width: 302px;
    height: 42px;
    margin-left: 8px;
    padding: 0 14px 0 17px;
    background-color: #101010;
    border-radius: 10px 10px 0 0;
}

.favicon {
    display: flex;
    align-items: center;
    justify-content: center;
    width: 20px;
    height: 20px;
    background-color: #fff;
    border-radius: 50%;
}

.tab-title {
    margin-left: 10px;
    padding-bottom: 2px;
    font-size: 14.200px;
    color: #f00000;
}

.tab-close {
    margin-left: auto;
}

.new-tab {
    display: flex;
    align-items: center;
    justify-content: center;
    width: 34px;
    height: 34px;
    margin: 4px 0 0 10px;
    background-color: #060606;
    border-radius: 50%;
}

.win-buttons {
    display: flex;
    height: 36px;
    margin-left: auto;
    background-color: #d80b0b;
}

.win-btn {
    display: flex;
    align-items: center;
    justify-content: center;
    width: 56px;
    height: 36px;
}

.win-btn-mid {
    width: 58px;
    border-left: 1px solid #8a1d1d;
    border-right: 1px solid #8a1d1d;
}

.win-btn-last {
    width: 57px;
}

.toolbar {
    position: relative;
    display: flex;
    align-items: center;
    height: 40px;
    padding: 0 0 5px 7px;
}

.tool {
    display: flex;
    justify-content: center;
    width: 40px;
}

.tool-line {
    fill: none;
    stroke: #c40000;
    stroke-width: 2;
}

.tool-dim .tool-line {
    stroke: #5c1414;
}

.omnibox {
    display: flex;
    align-items: center;
    width: 1450px;
    height: 35px;
    margin-left: 8px;
    padding: 0 15px;
    background-color: #202124;
    border-radius: 18px;
}

.url {
    margin-left: 12px;
    font-size: 16.500px;
    color: #9aa0a6;
}

.url-host {
    color: #fff;
}

.omni-key {
    margin-left: auto;
}

.omni-star {
    margin-left: 20px;
    margin-right: -2px;
}

.extensions {
    display: flex;
    margin-left: 8px;
}

.ext {
    display: flex;
    align-items: center;
    justify-content: center;
    width: 40px;
    height: 28px;
}

.wheel {
    position: relative;
    width: 18px;
    height: 18px;
    background: conic-gradient(#ff2b2b, #ffe600, #35e000, #00e0e0, #1a3cff, #e000e0, #ff2b2b);
    border-radius: 50%;
}

.wheel::before {
    content: "";
    position: absolute;
    inset: -3px;
    background:
        linear-gradient(#666, #666) center / 1px 100% no-repeat,
        linear-gradient(#666, #666) center / 100% 1px no-repeat;
}

.avatar {
    width: 28px;
    height: 28px;
    background-color: #000;
    border-radius: 50%;
}

.menu-dots {
    width: 4px;
    height: 4px;
    background-color: #b80000;
    border-radius: 50%;
    box-shadow: 0 -7px 0 #b80000, 0 7px 0 #b80000;
}

/* navbar */
.navbar {
    flex: none;
    display: flex;
    align-items: center;
    justify-content: space-between;
    height: 94px;
    padding: 2px 266px 0;
    background-color: #4a1f52;
}

.brand {
    display: flex;
    align-items: center;
    gap: 8px;
    font-size: 23.500px;
}

.nav-links {
    display: flex;
    gap: 11px;
}

.nav-link {
    display: flex;
    align-items: center;
    gap: 6px;
    font-size: 19px;
}

/* main */
.content {
    flex: 1;
}

.title {
    margin: 0;
    padding-top: 47px;
    font-family: Inter, "Open Sans", sans-serif;
    font-size: 52px;
    font-weight: 600;
    letter-spacing: .5px;
    line-height: 60px;
    text-align: center;
}

.columns {
    display: flex;
    gap: 56px;
    margin-top: 80px;
    padding-left: 98px;
}

.complaint-form {
    display: flex;
    flex-direction: column;
    gap: 7px;
    width: 675px;
    padding-top: 8px;
}

.field {
    display: block;
    width: 100%;
    height: 44px;
    padding: 12px 10px 0;
    background: transparent;
    border: 0;
    border-bottom: 2px solid #a52a2a;
    outline: none;
    font-family: inherit;
    font-size: 18.700px;
    color: #fff;
}

.area-wrap {
    height: 81px;
    border-bottom: 2px solid #a52a2a;
}

.field-area {
    height: 70px;
    padding-top: 13px;
    border-bottom: 0;
}

.field::placeholder {
    color: #757075;
}

.form-buttons {
    display: flex;
    gap: 167px;
    margin-top: 22px;
    padding-left: 43px;
}

.btn {
    height: 66px;
    padding: 2px 40px 0;
    background: linear-gradient(#a974ff, #e668ff);
    border: 0;
    border-radius: 33px;
    font-family: inherit;
    font-size: 19px;
    color: #fff;
    cursor: pointer;
}

/* map */
.map {
    position: relative;
    flex: none;
    width: 864px;
    height: 566px;
    overflow: hidden;
}

.map-canvas {
    display: block;
}

.road {
    fill: none;
    stroke: #fbfbf2;
    stroke-width: 3.600;
    stroke-linejoin: round;
}

.road-strong {
    stroke-width: 3.800;
}

.border {
    fill: none;
    stroke: #a4a7a8;
    stroke-width: 3;
    stroke-linejoin: round;
}

.border-dark {
    fill: none;
    stroke: #808596;
    stroke-width: 3.200;
    stroke-linejoin: round;
}

.motorway {
    fill: none;
    stroke: #f4b27e;
    stroke-width: 3.400;
    stroke-linejoin: round;
}

.lake {
    fill: #6fcdf5;
    stroke: #6fcdf5;
    stroke-width: 3;
    stroke-linejoin: round;
}

.dots {
    fill: #0c0c0c;
}

.labels text {
    text-anchor: middle;
    font-family: Roboto, "Open Sans", sans-serif;
    paint-order: stroke;
    stroke: rgba(255, 255, 255, .55);
    stroke-width: 2px;
}

.labels .state {
    font-size: 15px;
    font-weight: 700;
    letter-spacing: 2.400px;
    fill: #1d1d1d;
}

.labels .state-sm {
    font-size: 11.500px;
    letter-spacing: 2.100px;
}

.labels .state-start,
.labels .city-start {
    text-anchor: start;
}

.labels .state-end,
.labels .city-end {
    text-anchor: end;
}

.labels .city {
    font-size: 14.400px;
    fill: #4a4a48;
}

.labels .city-lg {
    font-size: 17.500px;
}

.labels .city-faint {
    fill: #a0a09a;
}

.labels .country {
    font-size: 25.500px;
    font-weight: 500;
    fill: #111;
}

.mapbox-word {
    font-family: Lato, "Open Sans", sans-serif;
    font-size: 21.500px;
    font-weight: 900;
    fill: #f4f4ec;
    stroke: #9a9a90;
    stroke-width: 2px;
    paint-order: stroke;
}

.attribution {
    position: absolute;
    right: 0;
    bottom: 0;
    display: flex;
    align-items: center;
    gap: 7px;
    height: 25px;
    padding: 0 7px;
    background-color: rgba(255, 255, 255, .5);
    font-family: "Liberation Sans", sans-serif;
    font-size: 15px;
    color: #6f6f6b;
}

.attribution b {
    color: #4a4a48;
    font-family: Roboto, sans-serif;
    letter-spacing: .4px;
}

/* taskbar */
.taskbar {
    flex: none;
    display: flex;
    height: 50px;
    background-color: #1a1a1a;
}

.start {
    display: flex;
    align-items: center;
    justify-content: center;
    width: 60px;
}

.search {
    display: flex;
    align-items: center;
    gap: 14px;
    width: 430px;
    padding: 0 0 2px 15px;
    background-color: #f0f0f0;
    border: 1px solid #b8b8b8;
    border-bottom: 0;
    font-size: 18px;
    color: #333;
}

.task {
    display: flex;
    align-items: center;
    justify-content: center;
    width: 62px;
}

.task:nth-child(3),
.task:nth-child(4) {
    width: 61px;
}

.task-view {
    padding-right: 4px;
}

.task-open {
    background: linear-gradient(#76b9ed, #76b9ed) 7px 100% / 51px 3px no-repeat;
}

.task-active {
    width: 61px;
    margin-left: 2px;
    padding-right: 3px;
    background:
        linear-gradient(#76b9ed, #76b9ed) 0 100% / 100% 3px no-repeat,
        linear-gradient(90deg, #525252 56px, #3a3a3a 56px);
}

.task-active + .task {
    width: 61px;
}

.cortana {
    width: 18px;
    height: 18px;
    border: 3px solid #f2f2f2;
    border-radius: 50%;
}

.chrome-logo {
    width: 28px;
    height: 28px;
    border-radius: 50%;
    background:
        radial-gradient(circle, #4a86f0 0 5.500px, #fff 5.500px 7.500px, transparent 7.500px),
        conic-gradient(from 285deg, #d9402f 0 120deg, #f5c02e 120deg 200deg, #2f9e47 200deg 360deg);
}

.pc-mark {
    font-family: "Liberation Sans", sans-serif;
    font-size: 12px;
    font-weight: 700;
    fill: #fff;
}

.tray {
    position: relative;
    flex: 1;
    display: flex;
    align-items: center;
    justify-content: flex-end;
    font-size: 14px;
    color: #e6e6e6;
}

.tray-chevron {
    margin-right: 10px;
}

.tray-battery {
    margin-right: 9px;
}

.tray-sound {
    margin-right: 14px;
}

.tray-wifi {
    margin-right: 13px;
}

.tray-lang {
    margin-right: 13px;
    font-size: 14.500px;
}

.clock {
    display: flex;
    flex-direction: column;
    align-items: center;
    gap: 3px;
    width: 82px;
    font-size: 14.500px;
}

.tray-notes {
    margin: 0 31px 0 20px;
}

.show-desktop {
    position: absolute;
    top: 0;
    right: 4px;
    bottom: 0;
    width: 1px;
    background-color: #555;
}
```
